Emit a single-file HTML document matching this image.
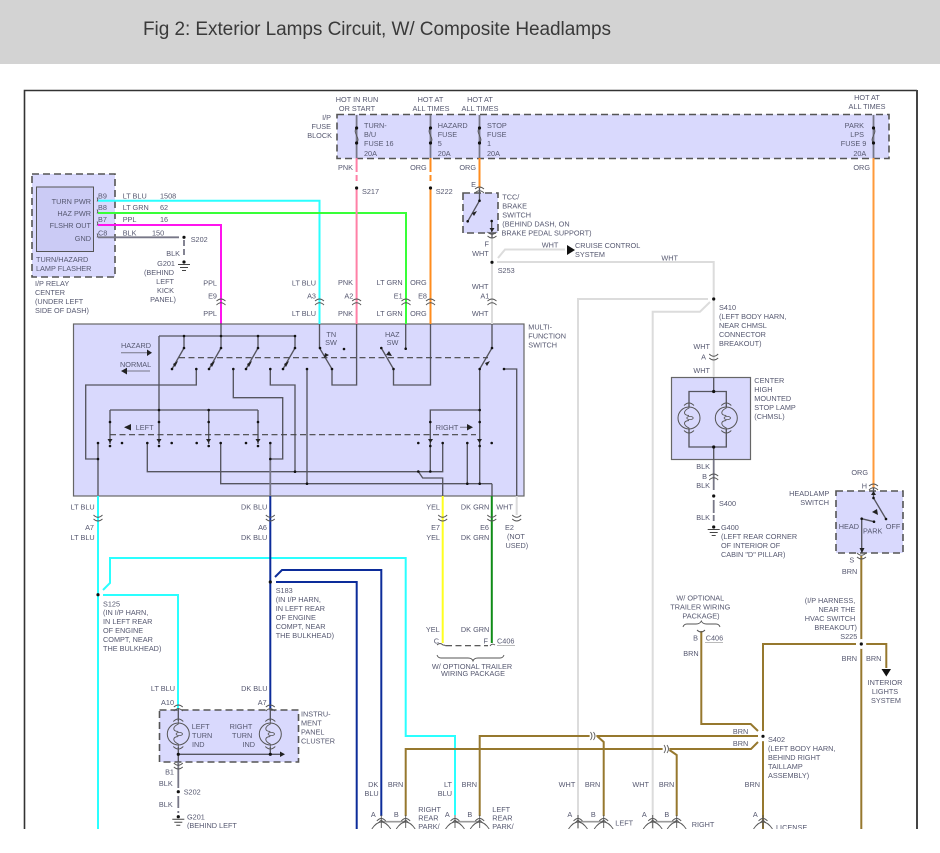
<!DOCTYPE html>
<html lang="en">
<head>
<meta charset="utf-8">
<title>Fig 2: Exterior Lamps Circuit, W/ Composite Headlamps</title>
<style>
html,body{margin:0;padding:0;background:#fff;width:940px;height:853px;overflow:hidden}
svg{display:block}
text{font-family:"Liberation Sans",sans-serif;font-size:7.3px;fill:#565870}
.e{text-anchor:end}.m{text-anchor:middle}
.title{font-size:19px;fill:#3a3a3a}
.w{fill:none;stroke-width:2;stroke-linejoin:miter}
.g{fill:none;stroke:#55555f;stroke-width:1.35}
.g2{fill:none;stroke:#777787;stroke-width:1.8}
.d{fill:none;stroke:#111;stroke-width:3.2;stroke-linecap:round}
.dash{fill:none;stroke:#444;stroke-width:1.2;stroke-dasharray:6 3.5}
.box{fill:#d9d9fd;stroke:#555;stroke-width:1.6;stroke-dasharray:7 4}
.sol{fill:#d9d9fd;stroke:#666;stroke-width:1.2}
.con{fill:none;stroke:#555;stroke-width:.9}
.dia{filter:blur(.25px)}
</style>
</head>
<body>
<svg width="940" height="853" viewBox="0 0 940 853" xmlns="http://www.w3.org/2000/svg">
<defs>
<g id="cu"><path class="con" d="M-4.5 -1Q0 -5 4.5 -1M-4.5 3Q0 -1.5 4.5 3"/></g>
<g id="cd"><path class="con" d="M-4.5 -3Q0 1.5 4.5 -3M-4.5 1Q0 5 4.5 1"/></g>
<g id="lamp"><circle r="11" fill="none" stroke="#555" stroke-width="1"/><path class="con" d="M0 -13V-10C-6 -7 -6 -3 0 -2.5M0 2.5C-6 3 -6 7 0 10V13M-5 -12.5Q0 -17.5 5 -12.5M-5 12.5Q0 17.5 5 12.5"/><ellipse cx="1" cy="0" rx="3.2" ry="1.6" fill="none" stroke="#555" stroke-width=".8"/></g>
<g id="gnd"><path d="M-6 2.5H6M-4 5.5H4M-2 8.5H2" fill="none" stroke="#444" stroke-width="1"/><circle r="1.6" fill="#111"/></g>
<g id="bl"><path class="con" d="M-9.5 10Q0 -4 9.5 10M-4.5 2Q0 -3 4.5 2" stroke-width="1"/><path d="M0 -4V9M-3 4L0 1L3 4" fill="none" stroke="#555" stroke-width=".9"/></g>
</defs>

<rect width="940" height="64" fill="#d3d3d3"/>
<text class="title" x="143" y="35" textLength="468" lengthAdjust="spacing">Fig 2: Exterior Lamps Circuit, W/ Composite Headlamps</text>

<g class="dia">
<!-- frame -->
<path d="M24.5 829V90.5H917" fill="none" stroke="#333" stroke-width="1.6"/>
<path d="M917 90V829" fill="none" stroke="#444" stroke-width="2"/>

<!-- boxes -->
<rect x="32" y="174" width="83" height="103" class="box"/>
<rect x="36.5" y="187" width="57" height="64.5" fill="#cbcbf5" stroke="#555" stroke-width="1"/>
<rect x="337" y="114.5" width="552" height="44" class="box"/>
<rect x="73.5" y="324" width="450.5" height="172" class="sol"/>
<rect x="463" y="193" width="35" height="40" class="box"/>
<rect x="671.5" y="377.5" width="79" height="82" class="sol"/>
<rect x="836" y="491" width="67" height="62" class="box"/>
<rect x="159.5" y="710" width="139" height="52" class="box"/>

<!-- flasher wires -->
<path class="w" stroke="#2affff" d="M98 200.7H319.5V324"/>
<path class="w" stroke="#38ff38" d="M98 213H406V324"/>
<path class="w" stroke="#ff14ee" d="M98 225H221V324"/>
<path class="g2" d="M98 237.3H179"/>
<path class="g2" stroke-dasharray="6 3" d="M184 240V258"/>
<path class="con" d="M97 197.5q1.5 2 0 4M97 209.5q1.5 2 0 4M97 221.5q1.5 2 0 4M97 233.5q1.5 2 0 4"/>

<!-- fuse wires -->
<path class="g2" d="M356.6 115V158M430.5 115V158M479.5 115V158M873.5 115V158"/>
<path class="con" d="M356.6 128c-5 5 5 10 0 15M430.5 128c-5 5 5 10 0 15M479.5 128c-5 5 5 10 0 15M873.5 128c5 5 -5 10 0 15"/>
<path class="w" stroke="#ff80a6" d="M356.6 158V172M356.6 175V181M356.6 188V324"/>
<path class="w" stroke="#ff8c1e" d="M430.5 158V172M430.5 175V181M430.5 188V324"/>
<path class="w" stroke="#ff8c1e" d="M479.5 158V188"/>
<path class="w" stroke="#ff9a3a" d="M873.5 158V488"/>

<!-- white wires -->
<path class="w" stroke="#dcdcdc" d="M492 238V324"/>
<path class="w" stroke="#dcdcdc" d="M498 258L505 249.5H565"/>
<path class="w" stroke="#dcdcdc" d="M497 262H713.7V377"/>
<path class="w" stroke="#dcdcdc" d="M708 299H578V829"/>
<path class="w" stroke="#dcdcdc" d="M710 302L700 311.7H652.7V829"/>
<path class="w" stroke="#dcdcdc" d="M516.7 496V515"/>
<path d="M567 245L575 250L567 255Z" fill="#111"/>

<!-- switch internals -->
<path class="g" d="M159 336H295M184 336V348M221 323V348M258 336V348M295 336V348M159 336V422M110 410H258M110 410V444M159 410V444M208.7 410V444M258 410V444"/>
<path class="g" d="M184 348L172 369M221 348L209 369M258 348L246 369M295 348L283 369"/>
<path class="g" d="M196.3 369V385H85.7V459H98"/>
<path class="g" d="M233.3 369V397.7H282.7V459H270.3"/>
<path class="g" d="M270.3 369V385H295V471.7"/>
<path class="g" d="M147.3 443V471.7H442.7V443"/>
<path class="g" d="M220.7 443V483.7H492"/>
<path class="g" d="M307 369V483.7"/>
<path class="g" d="M418.3 471.5L422.7 478H442.7V496"/>
<path class="g" d="M467.3 443V483.7M479.7 369V483.7M479.7 410H430.3V471.5"/>
<path class="g" d="M492 324V348L479.7 369M492 483.7V496"/>
<path class="g" d="M504 369H516.7V496"/>
<path class="g" d="M319.5 324V348L332 369V385H356.6V324"/>
<path class="g" d="M381.3 348L393.5 369V385H430.5V324"/>
<path class="g" d="M405.7 324V348.7"/>
<path class="g2" d="M98 443V496M270.3 443V496"/>
<path class="dash" d="M179 357.7H488M110 434.7H476"/>
<path d="M173 364l5 -3 -3 6zM210 364l5 -3 -3 6zM247 364l5 -3 -3 6zM284 364l5 -3 -3 6zM325 353l4 2 -5 3zM386 355l3 -4 3 5zM485 363l5 -2 -3 5z" fill="#222"/>
<path d="M107.5 439h5l-2.5 4zM156.5 439h5l-2.5 4zM206 439h5l-2.5 4zM255.5 439h5l-2.5 4zM428 439h5l-2.5 4zM477 439h5l-2.5 4z" fill="#222"/>
<path class="d" d="M184 336h0M221 336h0M258 336h0M295 336h0M184 348h0M221 348h0M258 348h0M295 348h0M172 369h0M196.3 369h0M209 369h0M233.3 369h0M246 369h0M270.3 369h0M283 369h0M307 369h0M320 348h0M332 369h0M344 349h0M381.3 348h0M393.5 369h0M405.7 348.7h0M492 348h0M479.7 369h0M504 369h0" style="stroke-width:2.6"/>
<path class="d" d="M159 410h0M110 422h0M159 422h0M208.7 422h0M258 422h0M208.7 410h0M430.3 422h0M479.7 422h0M479.7 410h0M98 443h0M122 443h0M147.3 443h0M171.7 443h0M196.7 443h0M220.7 443h0M246 443h0M270.3 443h0M110 446h0M159 446h0M208.7 446h0M258 446h0M418.3 443h0M430.3 446h0M442.7 443h0M467.3 443h0M479.7 446h0M491.7 443h0M98 459h0M270.3 459h0M295 471.7h0M307 483.7h0M418.3 471.5h0M430.3 471.5h0M467.3 483.7h0M479.7 483.7h0" style="stroke-width:2.6"/>
<path class="g2" d="M121 352.7H148M150 371H124M460 427.3H468M125 427.3H131" style="stroke-width:1"/>
<path d="M147 349.5L152 352.7L147 356ZM127 367.7L121 371L127 374.5ZM131 424L124 427.3L131 430.5ZM467 424L473 427.3L467 430.5Z" fill="#222"/>

<!-- lower wires -->
<path class="w" stroke="#2affff" d="M98 496V829"/>
<path class="w" stroke="#2affff" d="M103 590L110 583V558H405.7V736H455V815"/>
<path class="w" stroke="#2affff" d="M103 595H178V710"/>
<path class="w" stroke="#0c2c9a" d="M270.3 496V710"/>
<path class="w" stroke="#0c2c9a" d="M275 577L282 570H381.3V816"/>
<path class="w" stroke="#0c2c9a" d="M276 582H356.7V829"/>
<path class="w" stroke="#ffff20" d="M442.7 496V643"/>
<path class="w" stroke="#108c18" d="M491.8 496V643"/>

<!-- brown wires -->
<path class="w" stroke="#96782e" d="M861.3 556V829"/>
<path class="w" stroke="#96782e" d="M866 644H886.3V668"/>
<path class="w" stroke="#96782e" d="M856 644H763V731M763 741V829"/>
<path class="w" stroke="#96782e" d="M758 736H479.7V816"/>
<path class="w" stroke="#96782e" d="M758 742L751 749H405.7V816"/>
<path class="w" stroke="#96782e" d="M758 731L750.7 724H701.3V631"/>
<path class="w" stroke="#96782e" d="M668 749L676.7 755V816"/>
<path class="w" stroke="#96782e" d="M597 736L603.7 742V816"/>
<circle cx="593" cy="736" r="3.5" fill="#fff"/>
<circle cx="666" cy="749" r="3.5" fill="#fff"/>
<path class="con" d="M590.5 732q3 4 0 8M593.5 732q3 4 0 8M664 745q3 4 0 8M667 745q3 4 0 8"/>
<path d="M881.5 669H891L886.3 676.5Z" fill="#111"/>

<!-- BLK ground runs -->
<path class="g2" d="M713.7 460V490M713.7 500V513M713.7 515V521"/>
<path class="g2" d="M178.3 762V788M178.3 796V808M178.3 811V813"/>

<!-- CHMSL -->
<path class="g" d="M713.7 377V391.5M689 407V391.5H726.3V407M689 429V447H726.3V429M713.7 447V460"/>
<use href="#lamp" x="689" y="418"/><use href="#lamp" x="726.3" y="418"/>
<!-- cluster -->
<use href="#lamp" x="178.3" y="734"/><use href="#lamp" x="270.3" y="734"/>
<path class="g" d="M178.3 708V721M270.3 708V721M178.3 747V762M270.3 747V754M178.3 754.3H281"/>
<path d="M280 751.5L285 754.3L280 757Z" fill="#222"/>
<!-- head switch -->
<path class="g" d="M873.5 488V498L886 519M861.7 518.7V553M861.7 518.7L874 521.7"/>
<path d="M872 512l5 -3 1 6z M859.5 548h5l-2.5 5z M871 495h5l-2.5 -4z" fill="#222"/>
<path class="d" d="M873.5 498h0M886 519h0M861.7 518.7h0M874 521.7h0" style="stroke-width:2.6"/>
<!-- TCC switch -->
<path class="g" d="M479.5 188V200.7L467.7 221.3M491.7 221V232M492 233V238"/>
<path d="M472 213l5 -2 -3 5zM489.5 228h5l-2.5 4z" fill="#222"/>
<path class="d" d="M479.5 200.7h0M467.7 221.3h0M491.7 221h0" style="stroke-width:2.6"/>

<!-- halos + splice dots -->
<circle cx="763" cy="736.3" r="5" fill="#fff"/><circle cx="861.3" cy="644" r="5" fill="#fff"/>
<path class="d" d="M184 237.3h0M356.6 188h0M430.5 188h0M492 262.3h0M713.7 299h0M713.7 496h0M98 594.7h0M270.3 582h0M178.3 791.7h0M763 736.3h0M861.3 644h0M356.6 128h0M356.6 143h0M430.5 128h0M430.5 143h0M479.5 128h0M479.5 143h0M873.5 128h0M873.5 143h0M713.7 391.5h0M713.7 447h0M178.3 754.3h0M270.3 754.3h0"/>
<use href="#gnd" x="184" y="262"/><use href="#gnd" x="713.7" y="527"/><use href="#gnd" x="178.3" y="816.7"/>

<!-- connectors -->
<use href="#cu" x="221" y="302"/><use href="#cu" x="319.5" y="302"/><use href="#cu" x="356.6" y="302"/><use href="#cu" x="406" y="302"/><use href="#cu" x="430.5" y="302"/><use href="#cu" x="492" y="302"/>
<use href="#cu" x="479.5" y="190"/><use href="#cd" x="492" y="235"/><use href="#cd" x="713.7" y="357"/><use href="#cu" x="713.7" y="477"/><use href="#cu" x="873.5" y="487"/><use href="#cd" x="861.5" y="556"/>
<use href="#cd" x="98" y="518"/><use href="#cd" x="270.3" y="518"/><use href="#cd" x="442.7" y="518"/><use href="#cd" x="491.8" y="518"/><use href="#cd" x="516.7" y="518"/>
<use href="#cu" x="178.3" y="708"/><use href="#cu" x="270.3" y="708"/><use href="#cd" x="178.3" y="766"/>
<path class="con" d="M437 645q3 -3 6 0q2 0 3 1M490 646q2 -3 5 -1"/>
<path class="dash" d="M446 645.7H488" stroke-dasharray="8 4"/>
<path class="con" d="M437 655q1 3 4 3H468q4 0 5 3q1 -3 5 -3H500q3 0 4 -3"/>
<path class="con" d="M683 627q1 -3 4 -3H696q4 0 5.3 -3q1.3 3 5.3 3H716q3 0 4 3"/>
<path class="con" d="M697 630q4 4 8 0"/>
<path d="M705 642.5H723M497 645.5H515" stroke="#777" stroke-width=".6"/>

<!-- bottom lamps -->
<path d="M381.3 821.7H405.7M455 821.7H479.7M578 821.7H603.7M652.7 821.7H676.7" stroke="#9a9a9a" stroke-width="1.6"/>
<use href="#bl" x="381.3" y="819"/><use href="#bl" x="405.7" y="819"/><use href="#bl" x="455" y="819"/><use href="#bl" x="479.7" y="819"/><use href="#bl" x="578" y="819"/><use href="#bl" x="603.7" y="819"/><use href="#bl" x="652.7" y="819"/><use href="#bl" x="676.7" y="819"/><use href="#bl" x="763" y="819"/>

<!-- labels: top -->
<text class="m" x="357" y="102">HOT IN RUN</text><text class="m" x="357" y="111">OR START</text>
<text class="m" x="430.5" y="102">HOT AT</text><text class="m" x="431" y="111">ALL TIMES</text>
<text class="m" x="480" y="102">HOT AT</text><text class="m" x="480" y="111">ALL TIMES</text>
<text class="m" x="867" y="100">HOT AT</text><text class="m" x="867" y="109">ALL TIMES</text>
<text class="e" x="331" y="120">I/P</text><text class="e" x="331" y="129">FUSE</text><text class="e" x="332" y="138">BLOCK</text>
<text x="364" y="128">TURN-</text><text x="364" y="137">B/U</text><text x="364" y="146">FUSE 16</text><text x="364" y="156">20A</text>
<text x="437.7" y="128">HAZARD</text><text x="437.7" y="137">FUSE</text><text x="437.7" y="146">5</text><text x="437.7" y="156">20A</text>
<text x="487" y="128">STOP</text><text x="487" y="137">FUSE</text><text x="487" y="146">1</text><text x="487" y="156">20A</text>
<text class="e" x="864" y="128">PARK</text><text class="e" x="864" y="137">LPS</text><text class="e" x="866.3" y="146">FUSE 9</text><text class="e" x="866.3" y="156">20A</text>
<text class="e" x="353" y="170">PNK</text><text class="e" x="426.7" y="170">ORG</text><text class="e" x="476" y="170">ORG</text><text class="e" x="870" y="170">ORG</text>
<text x="362" y="194">S217</text><text x="435.7" y="194">S222</text><text class="e" x="476" y="187">E</text>
<text x="502.3" y="199.5">TCC/</text><text x="502.3" y="208.5">BRAKE</text><text x="502.3" y="217.5">SWITCH</text><text x="502.3" y="226.5">(BEHIND DASH, ON</text><text x="501.5" y="235.5">BRAKE PEDAL SUPPORT)</text>
<text class="e" x="489" y="246.5">F</text><text class="e" x="488.7" y="256">WHT</text><text class="m" x="550" y="247.5">WHT</text>
<text x="575" y="248">CRUISE CONTROL</text><text x="575" y="257">SYSTEM</text><text x="497.7" y="273">S253</text><text class="m" x="669.7" y="260.5">WHT</text>

<!-- flasher -->
<text class="e" x="91" y="204">TURN PWR</text><text class="e" x="91" y="216">HAZ PWR</text><text class="e" x="91" y="228">FLSHR OUT</text><text class="e" x="91" y="241">GND</text>
<text x="98" y="198.5">B9</text><text x="98" y="210">B8</text><text x="98" y="222">B7</text><text x="98" y="235.3">C8</text>
<text x="122.7" y="198.5">LT BLU</text><text x="160" y="198.5">1508</text><text x="122.7" y="210">LT GRN</text><text x="160" y="210">62</text><text x="122.7" y="222">PPL</text><text x="160" y="222">16</text><text x="122.7" y="235.3">BLK</text><text x="152" y="235.3">150</text>
<text x="190.7" y="242">S202</text><text class="e" x="180" y="256">BLK</text><text class="e" x="175" y="266">G201</text><text class="e" x="174" y="275">(BEHIND</text><text class="e" x="174" y="284">LEFT</text><text class="e" x="174" y="293">KICK</text><text class="e" x="176" y="302">PANEL)</text>
<text x="36" y="262">TURN/HAZARD</text><text x="36" y="271">LAMP FLASHER</text>
<text x="35" y="286">I/P RELAY</text><text x="35" y="295">CENTER</text><text x="35" y="304">(UNDER LEFT</text><text x="35" y="313">SIDE OF DASH)</text>

<!-- row above switch -->
<text class="e" x="217" y="285.5">PPL</text><text class="e" x="316" y="285.5">LT BLU</text><text class="e" x="353" y="285">PNK</text><text class="e" x="402.7" y="285">LT GRN</text><text class="e" x="426.7" y="285">ORG</text><text class="e" x="488.5" y="289">WHT</text>
<text class="e" x="217" y="298.5">E9</text><text class="e" x="316" y="298.5">A3</text><text class="e" x="353.3" y="298.5">A2</text><text class="e" x="402.7" y="298.5">E1</text><text class="e" x="427" y="298.5">E8</text><text class="e" x="489.3" y="298.5">A1</text>
<text class="e" x="217" y="316">PPL</text><text class="e" x="316" y="316">LT BLU</text><text class="e" x="353" y="316">PNK</text><text class="e" x="402.7" y="316">LT GRN</text><text class="e" x="426.7" y="316">ORG</text><text class="e" x="488.5" y="316">WHT</text>

<!-- switch labels -->
<text x="528.3" y="329.5">MULTI-</text><text x="528.3" y="338.5">FUNCTION</text><text x="528.3" y="347.5">SWITCH</text>
<text x="121" y="348">HAZARD</text><text x="120" y="367">NORMAL</text><text x="135.7" y="430">LEFT</text><text x="435.7" y="430">RIGHT</text>
<text class="m" x="331.3" y="337">TN</text><text class="m" x="331" y="345">SW</text><text class="m" x="392.3" y="337">HAZ</text><text class="m" x="392.5" y="345">SW</text>

<!-- below switch -->
<text class="e" x="94.7" y="509.5">LT BLU</text><text class="e" x="94" y="530">A7</text><text class="e" x="94.7" y="540">LT BLU</text>
<text class="e" x="267.3" y="509.5">DK BLU</text><text class="e" x="267" y="530">A6</text><text class="e" x="267.3" y="540">DK BLU</text>
<text class="e" x="440" y="509.5">YEL</text><text class="e" x="440" y="530">E7</text><text class="e" x="440" y="540">YEL</text>
<text class="e" x="489.3" y="509.5">DK GRN</text><text class="e" x="489" y="530">E6</text><text class="e" x="489.3" y="540">DK GRN</text>
<text x="496.3" y="509.5">WHT</text><text x="505" y="530">E2</text><text x="507" y="539">(NOT</text><text x="505.5" y="548">USED)</text>

<text x="103" y="606.5">S125</text><text x="103" y="615">(IN I/P HARN,</text><text x="103" y="624">IN LEFT REAR</text><text x="103" y="633">OF ENGINE</text><text x="103" y="642">COMPT, NEAR</text><text x="103" y="651">THE BULKHEAD)</text>
<text x="275.7" y="593">S183</text><text x="275.7" y="602">(IN I/P HARN,</text><text x="275.7" y="611">IN LEFT REAR</text><text x="275.7" y="620">OF ENGINE</text><text x="275.7" y="629">COMPT, NEAR</text><text x="275.7" y="638">THE BULKHEAD)</text>

<!-- cluster labels -->
<text class="e" x="175" y="691">LT BLU</text><text class="e" x="267.5" y="691">DK BLU</text><text class="e" x="174" y="705">A10</text><text class="e" x="266.7" y="705">A7</text>
<text x="191.7" y="729">LEFT</text><text x="192" y="738">TURN</text><text x="192" y="747">IND</text>
<text class="e" x="252.3" y="729">RIGHT</text><text class="e" x="252.3" y="738">TURN</text><text class="e" x="255" y="747">IND</text>
<text x="301" y="716.5">INSTRU-</text><text x="301" y="725.5">MENT</text><text x="301" y="734.5">PANEL</text><text x="301" y="743.5">CLUSTER</text>
<text class="e" x="174" y="774.5">B1</text><text class="e" x="172.7" y="786">BLK</text><text x="183.7" y="794.5">S202</text><text class="e" x="172.7" y="807">BLK</text><text x="187" y="819.5">G201</text><text x="187" y="828">(BEHIND LEFT</text>

<!-- C406 -->
<text class="e" x="439.7" y="632">YEL</text><text class="e" x="489.3" y="632">DK GRN</text><text class="e" x="439" y="643.3">C</text><text class="e" x="488" y="643.3">F</text><text x="497" y="643.3">C406</text>
<text class="m" x="472" y="669">W/ OPTIONAL TRAILER</text><text class="m" x="473" y="676">WIRING PACKAGE</text>
<text class="m" x="700.3" y="600.5">W/ OPTIONAL</text><text class="m" x="700.3" y="609.5">TRAILER WIRING</text><text class="m" x="701" y="618.5">PACKAGE)</text>
<text class="e" x="698" y="640.3">B</text><text x="705.7" y="640.3">C406</text><text class="e" x="698.7" y="656">BRN</text>

<!-- S225 -->
<text class="e" x="855.3" y="603">(I/P HARNESS,</text><text class="e" x="855.3" y="612">NEAR THE</text><text class="e" x="855.3" y="621">HVAC SWITCH</text><text class="e" x="857" y="630">BREAKOUT)</text><text class="e" x="857.3" y="639">S225</text>
<text class="e" x="857" y="661">BRN</text><text x="866" y="661">BRN</text>
<text class="m" x="885" y="685">INTERIOR</text><text class="m" x="885" y="694">LIGHTS</text><text class="m" x="886" y="703">SYSTEM</text>

<!-- S402 -->
<text x="768" y="742">S402</text><text x="768" y="751">(LEFT BODY HARN,</text><text x="768" y="760">BEHIND RIGHT</text><text x="768" y="769">TAILLAMP</text><text x="768" y="778">ASSEMBLY)</text>
<text class="e" x="748.3" y="734">BRN</text><text class="e" x="748.3" y="746">BRN</text>

<!-- bottom row -->
<text class="e" x="378.3" y="787">DK</text><text class="e" x="378.7" y="796">BLU</text><text class="e" x="403.3" y="787">BRN</text><text class="e" x="452" y="787">LT</text><text class="e" x="452" y="796">BLU</text><text class="e" x="477" y="787">BRN</text><text class="e" x="575.3" y="787">WHT</text><text class="e" x="600.3" y="787">BRN</text><text class="e" x="649" y="787">WHT</text><text class="e" x="674.3" y="787">BRN</text><text class="e" x="760" y="787">BRN</text>
<text class="e" x="375.7" y="817">A</text><text class="e" x="398.7" y="817">B</text><text class="e" x="449.7" y="817">A</text><text class="e" x="472.3" y="817">B</text><text class="e" x="572.3" y="817">A</text><text class="e" x="595.7" y="817">B</text><text class="e" x="646.7" y="817">A</text><text class="e" x="669.3" y="817">B</text><text class="e" x="757.7" y="817">A</text>
<text x="418.3" y="812">RIGHT</text><text x="418.3" y="820.3">REAR</text><text x="418.3" y="829">PARK/</text>
<text x="492.3" y="812">LEFT</text><text x="492.3" y="820.3">REAR</text><text x="492.3" y="829">PARK/</text>
<text x="615.3" y="825.3">LEFT</text><text x="691.7" y="827">RIGHT</text><text x="776" y="830">LICENSE</text>

<!-- CHMSL labels -->
<text x="719" y="310">S410</text><text x="719" y="319">(LEFT BODY HARN,</text><text x="719" y="328">NEAR CHMSL</text><text x="719" y="337">CONNECTOR</text><text x="719" y="346">BREAKOUT)</text>
<text class="e" x="710" y="349">WHT</text><text class="e" x="706" y="359.3">A</text><text class="e" x="710" y="373">WHT</text>
<text x="754.3" y="383">CENTER</text><text x="754.3" y="392">HIGH</text><text x="754.3" y="401">MOUNTED</text><text x="754.3" y="410">STOP LAMP</text><text x="754.3" y="419">(CHMSL)</text>
<text class="e" x="710" y="469">BLK</text><text class="e" x="707" y="479">B</text><text class="e" x="710" y="488">BLK</text><text x="719" y="506">S400</text><text class="e" x="710" y="520">BLK</text>
<text x="721" y="530">G400</text><text x="721" y="539">(LEFT REAR CORNER</text><text x="721" y="548">OF INTERIOR OF</text><text x="721" y="557">CABIN "D" PILLAR)</text>

<!-- headlamp switch labels -->
<text class="e" x="868" y="475">ORG</text><text class="e" x="867" y="488.5">H</text><text class="e" x="829.3" y="496">HEADLAMP</text><text class="e" x="829" y="505">SWITCH</text>
<text x="838.7" y="529">HEAD</text><text x="863" y="533.7">PARK</text><text x="885.7" y="529">OFF</text>
<text class="e" x="854.3" y="562.3">S</text><text class="e" x="857.3" y="574">BRN</text>
</g>

<!-- crop bottom -->
<rect x="0" y="829" width="940" height="24" fill="#fff"/>
</svg>
</body>
</html>
